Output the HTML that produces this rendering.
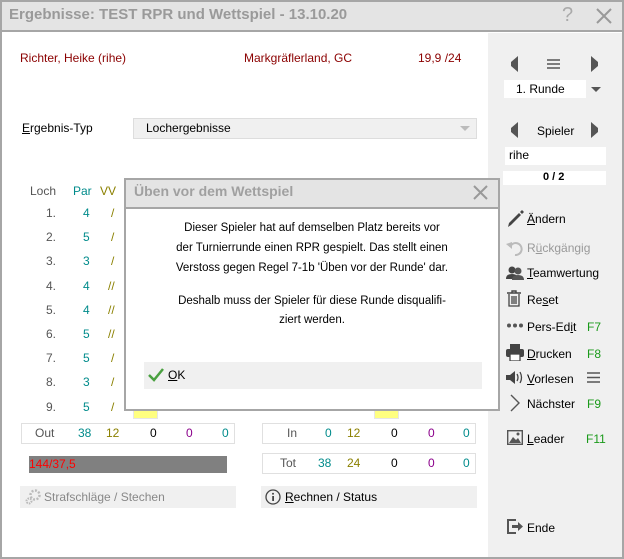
<!DOCTYPE html>
<html><head><meta charset="utf-8"><style>
*{margin:0;padding:0;box-sizing:border-box}
body{width:624px;height:559px;overflow:hidden;font-family:"Liberation Sans","DejaVu Sans",sans-serif;font-size:12px;background:#fff;position:relative;color:#000}
.a{position:absolute;white-space:nowrap}
.win{position:absolute;left:0;top:0;width:624px;height:559px;border:2px solid #a6a6a6;border-top-width:2px}
.tb{position:absolute;left:2px;top:2px;width:620px;height:30px;background:#e4e4e4;border-bottom:2px solid #a6a6a6}
.rp{position:absolute;left:488px;top:33px;width:134px;height:524px;background:#f0f0f0}
.dr{color:#8b0000}
.teal{color:#008b8b}
.ol{color:#8b8000}
.gr{color:#555}
.box{position:absolute;border:1px solid #e0e0e0;background:#fff}
.g{color:#1a9a1a}
u{text-decoration:underline}
.dl{position:absolute;left:126px;width:372px;text-align:center;font-size:11.5px}
</style></head><body>
<div class="win"></div>
<div class="tb"></div>
<div class="a" style="left:9px;top:6px;font-size:15px;font-weight:bold;color:#9a9a9a">Ergebnisse: TEST RPR und Wettspiel - 13.10.20</div>
<div class="a" style="left:562px;top:4px;font-size:20px;color:#aaa">?</div>
<svg class="a" style="left:596px;top:8px" width="16" height="16"><path d="M1 1L15 15M15 1L1 15" stroke="#999" stroke-width="2"/></svg>
<div class="rp"></div>

<div class="a dr" style="left:20px;top:51px">Richter, Heike (rihe)</div>
<div class="a dr" style="left:244px;top:51px">Markgräflerland, GC</div>
<div class="a dr" style="left:418px;top:51px">19,9 /24</div>
<div class="a" style="left:22px;top:121px"><u>E</u>rgebnis-Typ</div>
<div class="a" style="left:133px;top:118px;width:344px;height:21px;background:#f0f0f0;border:1px solid #ddd"></div>
<div class="a" style="left:146px;top:121px">Lochergebnisse</div>
<svg class="a" style="left:460px;top:126px" width="10" height="6"><path d="M0 0H10L5 5Z" fill="#bbb"/></svg>

<div class="a gr" style="left:30px;top:184px">Loch</div>
<div class="a teal" style="left:73px;top:184px">Par</div>
<div class="a ol" style="left:100px;top:184px">VV</div>
<div id="rows"></div>
<div class="a" style="left:133px;top:410px;width:25px;height:9px;background:#ffff80;border:1px solid #e6e6e6"></div>
<div class="a" style="left:374px;top:410px;width:25px;height:9px;background:#ffff80;border:1px solid #e6e6e6"></div>

<div class="box" style="left:21px;top:423px;width:214px;height:21px"></div>
<div class="a gr" style="left:35px;top:426px">Out</div>
<div class="a teal" style="left:78px;top:426px">38</div>
<div class="a ol" style="left:106px;top:426px">12</div>
<div class="a" style="left:150px;top:426px">0</div>
<div class="a" style="left:186px;top:426px;color:#8b008b">0</div>
<div class="a teal" style="left:222px;top:426px">0</div>
<div class="box" style="left:262px;top:423px;width:214px;height:21px"></div>
<div class="a gr" style="left:287px;top:426px">In</div>
<div class="a teal" style="left:325px;top:426px">0</div>
<div class="a ol" style="left:347px;top:426px">12</div>
<div class="a" style="left:391px;top:426px">0</div>
<div class="a" style="left:428px;top:426px;color:#8b008b">0</div>
<div class="a teal" style="left:463px;top:426px">0</div>

<div class="a" style="left:29px;top:456px;width:198px;height:17px;background:#808080"></div>
<div class="a" style="left:29px;top:457px;color:#f00">144/37,5</div>
<div class="box" style="left:262px;top:453px;width:214px;height:21px"></div>
<div class="a gr" style="left:280px;top:456px">Tot</div>
<div class="a teal" style="left:318px;top:456px">38</div>
<div class="a ol" style="left:347px;top:456px">24</div>
<div class="a" style="left:391px;top:456px">0</div>
<div class="a" style="left:428px;top:456px;color:#8b008b">0</div>
<div class="a teal" style="left:463px;top:456px">0</div>

<div class="a" style="left:20px;top:486px;width:216px;height:22px;background:#f0f0f0"></div>
<svg class="a" style="left:24px;top:489px" width="17" height="16"><circle cx="11" cy="6" r="4.5" fill="none" stroke="#bbb" stroke-width="2.5" stroke-dasharray="2 1.5"/><circle cx="5" cy="12" r="2.5" fill="none" stroke="#bbb" stroke-width="2" stroke-dasharray="1.5 1"/></svg>
<div class="a" style="left:44px;top:490px;color:#888">Strafschläge / Stechen</div>
<div class="a" style="left:261px;top:486px;width:216px;height:22px;background:#f0f0f0"></div>
<svg class="a" style="left:265px;top:489px" width="16" height="16"><circle cx="8" cy="8" r="7" fill="none" stroke="#444" stroke-width="1.3"/><rect x="7.2" y="7" width="1.8" height="5" fill="#444"/><circle cx="8" cy="4.7" r="1" fill="#444"/></svg>
<div class="a" style="left:285px;top:490px"><u>R</u>echnen / Status</div>

<!-- right panel -->
<svg class="a" style="left:510px;top:56px" width="8" height="16"><path d="M8 0V16L1 10V6Z" fill="#555"/></svg>
<svg class="a" style="left:547px;top:59px" width="13" height="10"><path d="M0 1H13M0 5H13M0 9H13" stroke="#555" stroke-width="1.6"/></svg>
<svg class="a" style="left:591px;top:56px" width="8" height="16"><path d="M0 0V16L7 10V6Z" fill="#555"/></svg>
<div class="a" style="left:504px;top:80px;width:82px;height:18px;background:#fff"></div>
<div class="a" style="left:516px;top:82px">1. Runde</div>
<svg class="a" style="left:591px;top:87px" width="10" height="5"><path d="M0 0H10L5 5Z" fill="#555"/></svg>
<svg class="a" style="left:510px;top:122px" width="8" height="16"><path d="M8 0V16L1 10V6Z" fill="#555"/></svg>
<div class="a" style="left:537px;top:124px">Spieler</div>
<svg class="a" style="left:591px;top:122px" width="8" height="16"><path d="M0 0V16L7 10V6Z" fill="#555"/></svg>
<div class="a" style="left:505px;top:147px;width:101px;height:18px;background:#fff"></div>
<div class="a" style="left:509px;top:148px">rihe</div>
<div class="a" style="left:503px;top:171px;width:103px;height:14px;background:#fff"></div>
<div class="a" style="left:543px;top:171px;font-weight:bold;font-size:11px">0 / 2</div>

<svg class="a" style="left:506px;top:210px" width="18" height="18"><path d="M2 17L3 13L13 3L15 5L5 15Z" fill="#444"/><path d="M14 2L16 0L18 2L16 4Z" fill="#444"/></svg>
<div class="a" style="left:527px;top:212px"><u>Ä</u>ndern</div>
<svg class="a" style="left:506px;top:240px" width="18" height="16"><path d="M4 7A6 6 0 1 1 9 15" fill="none" stroke="#bbb" stroke-width="2"/><path d="M0 4L6 2V9Z" fill="#bbb"/></svg>
<div class="a" style="left:527px;top:241px;color:#999">R<u>ü</u>ckgängig</div>
<svg class="a" style="left:506px;top:265px" width="18" height="15"><circle cx="6" cy="5" r="3.5" fill="#444"/><path d="M0 14Q0 9 6 9Q12 9 12 14Z" fill="#444"/><circle cx="12" cy="6" r="3.5" fill="#555"/><path d="M6 15Q6 10 12 10Q18 10 18 15Z" fill="#555"/></svg>
<div class="a" style="left:527px;top:266px"><u>T</u>eamwertung</div>
<svg class="a" style="left:507px;top:290px" width="14" height="17"><path d="M0 3H14M5 3V1H9V3" fill="none" stroke="#444" stroke-width="1.4"/><path d="M2 4V16H12V4M5 6V14M7 6V14M9 6V14" fill="none" stroke="#444" stroke-width="1.3"/></svg>
<div class="a" style="left:527px;top:293px">Re<u>s</u>et</div>
<svg class="a" style="left:507px;top:323px" width="16" height="5"><circle cx="2" cy="2.5" r="2" fill="#555"/><circle cx="8" cy="2.5" r="2" fill="#555"/><circle cx="14" cy="2.5" r="2" fill="#555"/></svg>
<div class="a" style="left:527px;top:320px">Pers-Ed<u>i</u>t</div>
<div class="a g" style="left:587px;top:320px">F7</div>
<svg class="a" style="left:506px;top:344px" width="18" height="17"><rect x="4" y="0" width="10" height="5" fill="#444"/><rect x="0" y="5" width="18" height="8" rx="2" fill="#444"/><rect x="4" y="10" width="10" height="7" fill="#fff" stroke="#444" stroke-width="1.3"/></svg>
<div class="a" style="left:527px;top:347px"><u>D</u>rucken</div>
<div class="a g" style="left:587px;top:347px">F8</div>
<svg class="a" style="left:506px;top:370px" width="18" height="15"><path d="M0 5H4L9 1V14L4 10H0Z" fill="#444"/><path d="M11 4Q13 7.5 11 11M14 2Q17 7.5 14 13" fill="none" stroke="#444" stroke-width="1.3"/></svg>
<div class="a" style="left:527px;top:372px"><u>V</u>orlesen</div>
<svg class="a" style="left:587px;top:372px" width="13" height="11"><path d="M0 1H13M0 5.5H13M0 10H13" stroke="#555" stroke-width="1.6"/></svg>
<svg class="a" style="left:510px;top:394px" width="10" height="18"><path d="M1 1L9 9L1 17" fill="none" stroke="#555" stroke-width="1.4"/></svg>
<div class="a" style="left:527px;top:397px">Nächster</div>
<div class="a g" style="left:587px;top:397px">F9</div>
<svg class="a" style="left:507px;top:430px" width="16" height="15"><rect x="0.7" y="0.7" width="14.6" height="13.6" fill="none" stroke="#555" stroke-width="1.4"/><path d="M2 13L6 7L9 10L11 8L14 13Z" fill="#555"/><circle cx="11" cy="4" r="1.5" fill="#555"/></svg>
<div class="a" style="left:527px;top:432px"><u>L</u>eader</div>
<div class="a g" style="left:586px;top:432px">F11</div>
<svg class="a" style="left:507px;top:519px" width="16" height="15"><path d="M9 1H1V14H9" fill="none" stroke="#555" stroke-width="2"/><path d="M5 6H11V3L16 7.5L11 12V9H5Z" fill="#555"/></svg>
<div class="a" style="left:527px;top:521px">Ende</div>

<!-- dialog -->
<div class="a" style="left:124px;top:178px;width:376px;height:233px;background:#fff;border:2px solid #a6a6a6"></div>
<div class="a" style="left:126px;top:180px;width:372px;height:29px;background:#e4e4e4;border-bottom:2px solid #a6a6a6"></div>
<div class="a" style="left:134px;top:183px;font-size:14px;font-weight:bold;color:#a0a0a0">Üben vor dem Wettspiel</div>
<svg class="a" style="left:473px;top:185px" width="15" height="15"><path d="M1 1L14 14M14 1L1 14" stroke="#999" stroke-width="2"/></svg>
<div class="dl" style="top:222px">Dieser Spieler hat auf demselben Platz bereits vor</div>
<div class="dl" style="top:242px">der Turnierrunde einen RPR gespielt. Das stellt einen</div>
<div class="dl" style="top:262px">Verstoss gegen Regel 7-1b 'Üben vor der Runde' dar.</div>
<div class="dl" style="top:295px">Deshalb muss der Spieler für diese Runde disqualifi-</div>
<div class="dl" style="top:314px">ziert werden.</div>
<div class="a" style="left:144px;top:362px;width:338px;height:27px;background:#f0f0f0"></div>
<svg class="a" style="left:148px;top:368px" width="16" height="14"><path d="M1 7L6 12L15 1" fill="none" stroke="#4aa040" stroke-width="2.5"/></svg>
<div class="a" style="left:168px;top:368px"><u>O</u>K</div>

<script>
var ys=[206,230,254,279,303,327,351,375,400],p=[4,5,3,4,4,5,5,3,5],v=['/','/','/','//','//','//','/','/','/'],h='';
for(var i=0;i<9;i++){h+='<div class="a gr" style="left:46px;top:'+ys[i]+'px">'+(i+1)+'.</div><div class="a teal" style="left:83px;top:'+ys[i]+'px">'+p[i]+'</div><div class="a ol" style="left:'+(v[i].length>1?108:111)+'px;top:'+ys[i]+'px">'+v[i]+'</div>';}
document.getElementById('rows').innerHTML=h;
</script>
</body></html>
